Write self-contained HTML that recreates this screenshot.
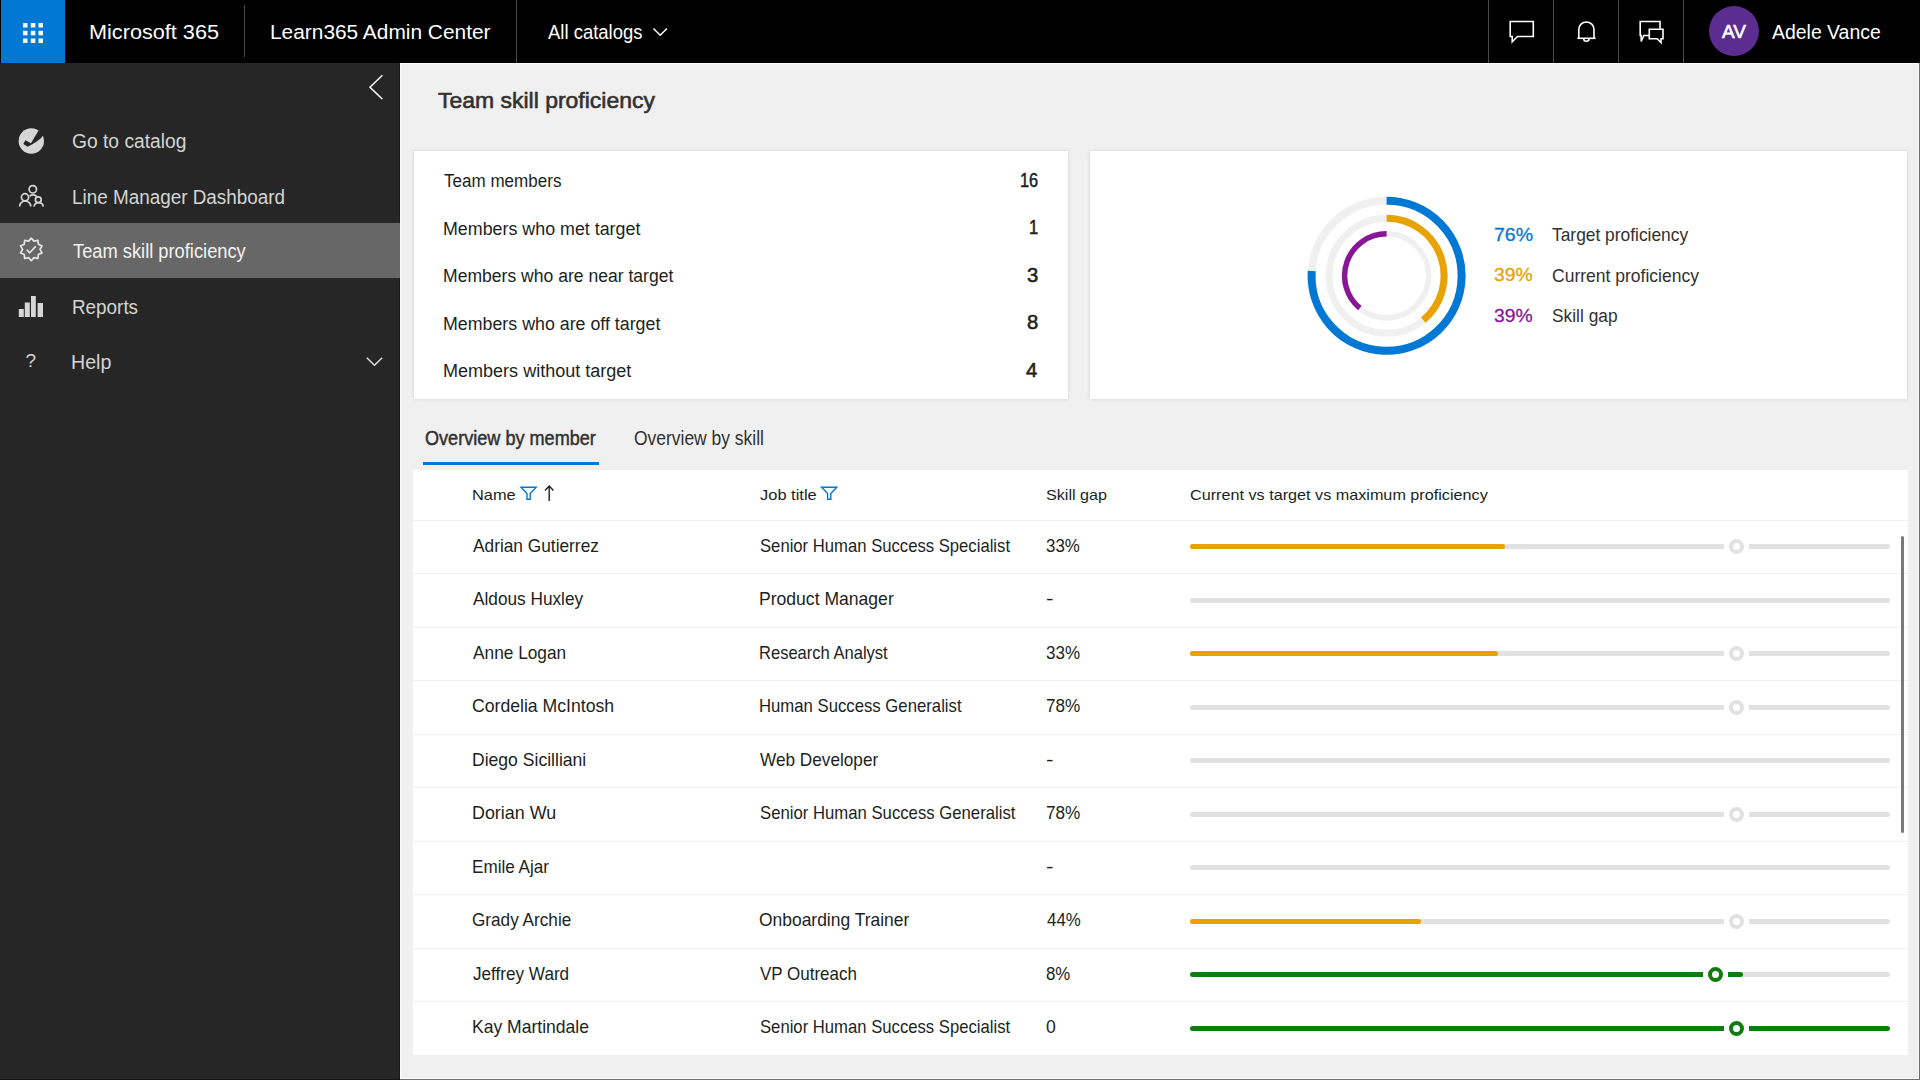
<!DOCTYPE html>
<html><head><meta charset="utf-8"><title>Team skill proficiency</title>
<style>
html,body{margin:0;padding:0;width:1920px;height:1080px;overflow:hidden;background:#f0f0f0;font-family:"Liberation Sans",sans-serif;}
.abs{position:absolute;}
.t{position:absolute;white-space:nowrap;display:inline-block;}
.b{position:absolute;height:5px;}
.ring{position:absolute;width:7px;height:7px;border:4px solid #e1e1e1;border-radius:50%;background:#fff;}
.vd{position:absolute;width:1px;background:#4a4a4a;}
.sep{position:absolute;left:413px;width:1495px;height:1px;background:#f0f0f0;}
</style></head>
<body>
<!-- header -->
<div class="abs" style="left:0;top:0;width:1920px;height:63px;background:#000"></div>
<div class="abs" style="left:1px;top:0;width:64px;height:63px;background:#0078d4"></div>
<svg class="abs" style="left:0;top:0" width="70" height="63">
  <g fill="#fff">
    <rect x="23" y="23" width="4.5" height="4.5"/><rect x="30.8" y="23" width="4.5" height="4.5"/><rect x="38.5" y="23" width="4.5" height="4.5"/>
    <rect x="23" y="30.8" width="4.5" height="4.5"/><rect x="30.8" y="30.8" width="4.5" height="4.5"/><rect x="38.5" y="30.8" width="4.5" height="4.5"/>
    <rect x="23" y="38.5" width="4.5" height="4.5"/><rect x="30.8" y="38.5" width="4.5" height="4.5"/><rect x="38.5" y="38.5" width="4.5" height="4.5"/>
  </g>
</svg>
<div class="vd" style="left:244px;top:5px;height:52px"></div>
<div class="vd" style="left:516px;top:0px;height:63px"></div>
<div class="vd" style="left:1488px;top:0px;height:63px"></div>
<div class="vd" style="left:1553px;top:0px;height:63px"></div>
<div class="vd" style="left:1618px;top:0px;height:63px"></div>
<div class="vd" style="left:1683px;top:0px;height:63px"></div>
<svg class="abs" style="left:0;top:0" width="1920" height="63">
  <!-- all catalogs chevron -->
  <path d="M653.5 28.5 L660.2 35.2 L667 28.5" fill="none" stroke="#fff" stroke-width="1.5"/>
  <!-- chat -->
  <path d="M1510.2 21.5 H1533.3 V36.5 H1517.5 L1512.2 41.8 V36.5 H1510.2 Z" fill="none" stroke="#fff" stroke-width="1.6"/>
  <!-- bell -->
  <path d="M1578.8 38 V29.5 A7.6 7.6 0 0 1 1594 29.5 V38" fill="none" stroke="#fff" stroke-width="1.6"/>
  <path d="M1577.3 38.3 H1595.6" fill="none" stroke="#fff" stroke-width="1.6"/>
  <path d="M1583.6 38.5 A2.8 2.8 0 0 0 1589.2 38.5" fill="none" stroke="#fff" stroke-width="1.5"/>
  <!-- chat 2 -->
  <path d="M1649 35.5 H1643.8 L1641.2 41.5 V35.5 H1640.2 V21.5 H1660 V28.8" fill="none" stroke="#fff" stroke-width="1.6"/>
  <path d="M1649.3 29.3 H1663 V38.8 H1661 V42.5 L1657.2 38.8 H1649.3 Z" fill="none" stroke="#fff" stroke-width="1.6"/>
</svg>
<div class="abs" style="left:1709px;top:5.5px;width:50px;height:50px;border-radius:50%;background:#5c2d91"></div>
<span class="t" style="left:1709px;top:20.5px;width:50px;text-align:center;font-size:19px;line-height:22px;font-weight:400;-webkit-text-stroke:0.6px #fff;color:#fff">AV</span>

<!-- sidebar -->
<div class="abs" style="left:0;top:63px;width:400px;height:1017px;background:#262626"></div>
<div class="abs" style="left:399px;top:63px;width:1px;height:1017px;background:#1c1c1c"></div>
<div class="abs" style="left:0;top:223px;width:400px;height:55px;background:#676767"></div>
<svg class="abs" style="left:0;top:63px" width="400" height="340">
  <g transform="translate(0,-63)">
  <!-- collapse chevron -->
  <path d="M382.4 75.3 L370 87.3 L382.4 99.1" fill="none" stroke="#f0f0f0" stroke-width="1.6"/>
  <!-- go to catalog: filled circle with check -->
  <circle cx="31.3" cy="141" r="12.7" fill="#d6d6d6"/>
  <path d="M23.3 144 L25.4 140.2 L31 143.3 L38.8 130 L44 134.5 Q40 140.5 27.7 146.8 Z" fill="#262626"/>
  <!-- people icon -->
  <g fill="none" stroke="#d6d6d6" stroke-width="1.7">
    <circle cx="32.8" cy="189.3" r="3.7"/>
    <path d="M29.6 196.2 A6 6 0 0 1 37.2 196.8"/>
    <circle cx="25" cy="197.3" r="3.6"/>
    <path d="M19.6 206.6 A5.6 5.6 0 0 1 30.8 206.6"/>
    <circle cx="38.3" cy="199.8" r="2.9"/>
    <path d="M34 206.6 A4.7 4.7 0 0 1 43.3 206.6"/>
  </g>
  <!-- badge icon -->
  <path fill="none" stroke="#e6e6e6" stroke-width="1.7" stroke-linejoin="round" d="M31.30 238.10 L33.99 241.13 L37.94 240.26 L38.34 244.29 L42.05 245.91 L40.00 249.40 L42.05 252.89 L38.34 254.51 L37.94 258.54 L33.99 257.67 L31.30 260.70 L28.61 257.67 L24.66 258.54 L24.26 254.51 L20.55 252.89 L22.60 249.40 L20.55 245.91 L24.26 244.29 L24.66 240.26 L28.61 241.13 Z"/>
  <path d="M26.7 249.6 L29.6 252.8 L35.8 246.4" fill="none" stroke="#e6e6e6" stroke-width="1.6"/>
  <!-- reports bars -->
  <g fill="#d6d6d6">
    <rect x="18.8" y="309" width="5" height="8"/>
    <rect x="24.8" y="302.5" width="5" height="14.5"/>
    <rect x="31" y="296" width="4.8" height="21"/>
    <rect x="37.6" y="303" width="5.4" height="14"/>
  </g>
  <!-- help chevron -->
  <path d="M366.8 357.8 L374.5 365.3 L382.2 357.8" fill="none" stroke="#e0e0e0" stroke-width="1.5"/>
  </g>
</svg>
<span class="t" style="left:25.5px;top:351px;font-size:19px;line-height:19px;color:#d6d6d6">?</span>

<!-- cards -->
<div class="abs" style="left:414px;top:151px;width:654px;height:248px;background:#fff;box-shadow:0 0 1px rgba(0,0,0,0.10),0 0 4px rgba(0,0,0,0.10)"></div>
<div class="abs" style="left:1090px;top:151px;width:817px;height:248px;background:#fff;box-shadow:0 0 1px rgba(0,0,0,0.10),0 0 4px rgba(0,0,0,0.10)"></div>
<svg class="abs" width="1920" height="1080" style="left:0;top:0"><circle cx="1386.6" cy="275.8" r="75" fill="none" stroke="#f0f0f0" stroke-width="8"/><circle cx="1386.6" cy="275.8" r="57.5" fill="none" stroke="#f0f0f0" stroke-width="7"/><circle cx="1386.6" cy="275.8" r="42" fill="none" stroke="#f0f0f0" stroke-width="5.5"/><path d="M1386.60 200.80 A75 75 0 1 1 1311.75 271.09" fill="none" stroke="#0078d4" stroke-width="8"/><path d="M1386.60 218.30 A57.5 57.5 0 0 1 1423.25 320.10" fill="none" stroke="#e8a202" stroke-width="7"/><path d="M1386.60 233.80 A42 42 0 0 0 1359.83 308.16" fill="none" stroke="#881798" stroke-width="5.5"/></svg>

<!-- tabs underline -->
<div class="abs" style="left:423px;top:462px;width:176px;height:3px;background:#0078d4"></div>

<!-- table -->
<div class="abs" style="left:413px;top:470px;width:1495px;height:585px;background:#fff"></div>
<div class="sep" style="top:520px"></div>
<div class="sep" style="top:573px"></div>
<div class="sep" style="top:627px"></div>
<div class="sep" style="top:680px"></div>
<div class="sep" style="top:734px"></div>
<div class="sep" style="top:787px"></div>
<div class="sep" style="top:841px"></div>
<div class="sep" style="top:894px"></div>
<div class="sep" style="top:948px"></div>
<div class="sep" style="top:1001px"></div>
<svg class="abs" style="left:0;top:470px" width="1920" height="50">
  <g transform="translate(0,-470)" fill="none">
    <path d="M521 487.2 H536.2 L530.2 493.6 V499.2 H527 V493.6 Z" stroke="#0078d4" stroke-width="1.4" stroke-linejoin="miter"/>
    <path d="M821.6 487.2 H836.8 L830.8 493.6 V499.2 H827.6 V493.6 Z" stroke="#0078d4" stroke-width="1.4"/>
    <path d="M549.2 501 V486.5 M545 490.5 L549.2 486 L553.4 490.5" stroke="#201f1e" stroke-width="1.4"/>
  </g>
</svg>
<div class="b" style="left:1190.00px;top:544.10px;width:533.50px;background:#e1e1e1;border-radius:2.5px 0 0 2.5px;"></div>
<div class="b" style="left:1749.00px;top:544.10px;width:141.00px;background:#e1e1e1;border-radius:0 2.5px 2.5px 0;"></div>
<div class="b" style="left:1190.00px;top:544.10px;width:315.00px;background:#e8a202;border-radius:2.5px 2.5px 2.5px 2.5px;"></div>
<div class="ring" style="left:1728.70px;top:539.10px;border-color:#e1e1e1"></div>
<div class="b" style="left:1190.00px;top:597.60px;width:700.00px;background:#e1e1e1;border-radius:2.5px 2.5px 2.5px 2.5px;"></div>
<div class="b" style="left:1190.00px;top:651.10px;width:533.50px;background:#e1e1e1;border-radius:2.5px 0 0 2.5px;"></div>
<div class="b" style="left:1749.00px;top:651.10px;width:141.00px;background:#e1e1e1;border-radius:0 2.5px 2.5px 0;"></div>
<div class="b" style="left:1190.00px;top:651.10px;width:307.50px;background:#e8a202;border-radius:2.5px 2.5px 2.5px 2.5px;"></div>
<div class="ring" style="left:1728.70px;top:646.10px;border-color:#e1e1e1"></div>
<div class="b" style="left:1190.00px;top:704.60px;width:533.50px;background:#e1e1e1;border-radius:2.5px 0 0 2.5px;"></div>
<div class="b" style="left:1749.00px;top:704.60px;width:141.00px;background:#e1e1e1;border-radius:0 2.5px 2.5px 0;"></div>
<div class="ring" style="left:1728.70px;top:699.60px;border-color:#e1e1e1"></div>
<div class="b" style="left:1190.00px;top:758.10px;width:700.00px;background:#e1e1e1;border-radius:2.5px 2.5px 2.5px 2.5px;"></div>
<div class="b" style="left:1190.00px;top:811.60px;width:533.50px;background:#e1e1e1;border-radius:2.5px 0 0 2.5px;"></div>
<div class="b" style="left:1749.00px;top:811.60px;width:141.00px;background:#e1e1e1;border-radius:0 2.5px 2.5px 0;"></div>
<div class="ring" style="left:1728.70px;top:806.60px;border-color:#e1e1e1"></div>
<div class="b" style="left:1190.00px;top:865.10px;width:700.00px;background:#e1e1e1;border-radius:2.5px 2.5px 2.5px 2.5px;"></div>
<div class="b" style="left:1190.00px;top:918.60px;width:533.50px;background:#e1e1e1;border-radius:2.5px 0 0 2.5px;"></div>
<div class="b" style="left:1749.00px;top:918.60px;width:141.00px;background:#e1e1e1;border-radius:0 2.5px 2.5px 0;"></div>
<div class="b" style="left:1190.00px;top:918.60px;width:231.00px;background:#e8a202;border-radius:2.5px 2.5px 2.5px 2.5px;"></div>
<div class="ring" style="left:1728.70px;top:913.60px;border-color:#e1e1e1"></div>
<div class="b" style="left:1190.00px;top:972.10px;width:512.50px;background:#107c10;border-radius:2.5px 0 0 2.5px;"></div>
<div class="b" style="left:1728.00px;top:972.10px;width:162.00px;background:#e1e1e1;border-radius:0 2.5px 2.5px 0;"></div>
<div class="b" style="left:1728.00px;top:972.10px;width:15.00px;background:#107c10;border-radius:0 2.5px 2.5px 0;"></div>
<div class="ring" style="left:1707.50px;top:967.10px;border-color:#107c10"></div>
<div class="b" style="left:1190.00px;top:1025.60px;width:533.50px;background:#107c10;border-radius:2.5px 0 0 2.5px;"></div>
<div class="b" style="left:1749.00px;top:1025.60px;width:141.00px;background:#107c10;border-radius:0 2.5px 2.5px 0;"></div>
<div class="ring" style="left:1728.70px;top:1020.60px;border-color:#107c10"></div>
<!-- scrollbar -->
<div class="abs" style="left:1901px;top:536px;width:3px;height:297px;background:#7a7a7a;border-radius:1.5px"></div>
<!-- window border -->
<div class="abs" style="left:400px;top:63px;width:1px;height:1016px;background:#fcfcfc"></div>
<div class="abs" style="left:400px;top:63px;width:1519px;height:1px;background:#fcfcfc"></div>
<div class="abs" style="left:400px;top:1078px;width:1519px;height:1px;background:#fafafa"></div>
<div class="abs" style="left:1918px;top:63px;width:1px;height:1016px;background:#fafafa"></div>
<div class="abs" style="left:1919px;top:63px;width:1px;height:1017px;background:#6e6e6e"></div>
<div class="abs" style="left:400px;top:1079px;width:1520px;height:1px;background:#6e6e6e"></div>
<div class="abs" style="left:0;top:1079px;width:400px;height:1px;background:#141414"></div>


<span class="t" style="left:89.31px;transform-origin:0 0;top:22.47px;font-size:20.71px;line-height:20.71px;font-weight:400;color:#ffffff;transform:scaleX(1.0462);">Microsoft 365</span>
<span class="t" style="left:269.57px;transform-origin:0 0;top:22.47px;font-size:20.71px;line-height:20.71px;font-weight:400;color:#ffffff;transform:scaleX(1.0083);">Learn365 Admin Center</span>
<span class="t" style="left:548.00px;transform-origin:0 0;top:22.47px;font-size:20.71px;line-height:20.71px;font-weight:400;color:#ffffff;transform:scaleX(0.8929);">All catalogs</span>
<span class="t" style="left:1772.00px;transform-origin:0 0;top:22.47px;font-size:20.71px;line-height:20.71px;font-weight:400;color:#ffffff;transform:scaleX(0.9385);">Adele Vance</span>
<span class="t" style="left:72.10px;transform-origin:0 0;top:132.44px;font-size:19.33px;line-height:19.33px;font-weight:400;color:#d4d4d4;transform:scaleX(0.9956);">Go to catalog</span>
<span class="t" style="left:71.53px;transform-origin:0 0;top:187.74px;font-size:19.33px;line-height:19.33px;font-weight:400;color:#d4d4d4;transform:scaleX(0.9765);">Line Manager Dashboard</span>
<span class="t" style="left:72.71px;transform-origin:0 0;top:242.44px;font-size:19.33px;line-height:19.33px;font-weight:400;color:#f4f4f4;transform:scaleX(0.9461);">Team skill proficiency</span>
<span class="t" style="left:71.53px;transform-origin:0 0;top:297.64px;font-size:19.33px;line-height:19.33px;font-weight:400;color:#d4d4d4;transform:scaleX(0.9760);">Reports</span>
<span class="t" style="left:71.47px;transform-origin:0 0;top:352.64px;font-size:19.33px;line-height:19.33px;font-weight:400;color:#d4d4d4;transform:scaleX(1.0143);">Help</span>
<span class="t" style="left:437.64px;transform-origin:0 0;top:89.01px;font-size:22.67px;line-height:22.67px;font-weight:400;color:#323130;transform:scaleX(1.0133);-webkit-text-stroke:0.6px #323130;">Team skill proficiency</span>
<span class="t" style="left:444.13px;transform-origin:0 0;top:171.26px;font-size:19.19px;line-height:19.19px;font-weight:400;color:#201f1e;transform:scaleX(0.8880);">Team members</span>
<span class="t" style="left:1019.68px;transform-origin:0 0;top:170.89px;font-size:19.62px;line-height:19.62px;font-weight:400;color:#201f1e;transform:scaleX(0.8332);-webkit-text-stroke:0.55px #201f1e;">16</span>
<span class="t" style="left:443.01px;transform-origin:0 0;top:218.86px;font-size:19.19px;line-height:19.19px;font-weight:400;color:#201f1e;transform:scaleX(0.9300);">Members who met target</span>
<span class="t" style="left:1028.67px;transform-origin:0 0;top:218.49px;font-size:19.62px;line-height:19.62px;font-weight:400;color:#201f1e;transform:scaleX(0.8435);-webkit-text-stroke:0.55px #201f1e;">1</span>
<span class="t" style="left:443.03px;transform-origin:0 0;top:266.06px;font-size:19.19px;line-height:19.19px;font-weight:400;color:#201f1e;transform:scaleX(0.9151);">Members who are near target</span>
<span class="t" style="left:1026.77px;transform-origin:0 0;top:265.69px;font-size:19.62px;line-height:19.62px;font-weight:400;color:#201f1e;transform:scaleX(1.0311);-webkit-text-stroke:0.55px #201f1e;">3</span>
<span class="t" style="left:443.01px;transform-origin:0 0;top:313.76px;font-size:19.19px;line-height:19.19px;font-weight:400;color:#201f1e;transform:scaleX(0.9278);">Members who are off target</span>
<span class="t" style="left:1026.77px;transform-origin:0 0;top:313.39px;font-size:19.62px;line-height:19.62px;font-weight:400;color:#201f1e;transform:scaleX(1.0311);-webkit-text-stroke:0.55px #201f1e;">8</span>
<span class="t" style="left:442.99px;transform-origin:0 0;top:360.96px;font-size:19.19px;line-height:19.19px;font-weight:400;color:#201f1e;transform:scaleX(0.9395);">Members without target</span>
<span class="t" style="left:1026.38px;transform-origin:0 0;top:360.59px;font-size:19.62px;line-height:19.62px;font-weight:400;color:#201f1e;transform:scaleX(1.0378);-webkit-text-stroke:0.55px #201f1e;">4</span>
<span class="t" style="left:1493.84px;transform-origin:0 0;top:225.63px;font-size:18.75px;line-height:18.75px;font-weight:400;color:#0078d4;transform:scaleX(1.0391);-webkit-text-stroke:0.3px #0078d4;">76%</span>
<span class="t" style="left:1552.23px;transform-origin:0 0;top:225.87px;font-size:18.46px;line-height:18.46px;font-weight:400;color:#323130;transform:scaleX(0.9420);">Target proficiency</span>
<span class="t" style="left:1494.15px;transform-origin:0 0;top:266.38px;font-size:18.75px;line-height:18.75px;font-weight:400;color:#e8a202;transform:scaleX(1.0307);-webkit-text-stroke:0.3px #e8a202;">39%</span>
<span class="t" style="left:1551.68px;transform-origin:0 0;top:266.62px;font-size:18.46px;line-height:18.46px;font-weight:400;color:#323130;transform:scaleX(0.9494);">Current proficiency</span>
<span class="t" style="left:1494.15px;transform-origin:0 0;top:307.23px;font-size:18.75px;line-height:18.75px;font-weight:400;color:#881798;transform:scaleX(1.0307);-webkit-text-stroke:0.3px #881798;">39%</span>
<span class="t" style="left:1551.96px;transform-origin:0 0;top:307.47px;font-size:18.46px;line-height:18.46px;font-weight:400;color:#323130;transform:scaleX(0.9409);">Skill gap</span>
<span class="t" style="left:424.95px;transform-origin:0 0;top:428.45px;font-size:20.49px;line-height:20.49px;font-weight:400;color:#323130;transform:scaleX(0.8829);-webkit-text-stroke:0.5px #323130;">Overview by member</span>
<span class="t" style="left:633.78px;transform-origin:0 0;top:428.45px;font-size:20.49px;line-height:20.49px;font-weight:400;color:#323130;transform:scaleX(0.8517);">Overview by skill</span>
<span class="t" style="left:472.22px;transform-origin:0 0;top:487.73px;font-size:14.97px;line-height:14.97px;font-weight:400;color:#201f1e;transform:scaleX(1.0928);">Name</span>
<span class="t" style="left:759.74px;transform-origin:0 0;top:487.73px;font-size:14.97px;line-height:14.97px;font-weight:400;color:#201f1e;transform:scaleX(1.0994);">Job title</span>
<span class="t" style="left:1046.10px;transform-origin:0 0;top:487.73px;font-size:14.97px;line-height:14.97px;font-weight:400;color:#201f1e;transform:scaleX(1.0772);">Skill gap</span>
<span class="t" style="left:1189.54px;transform-origin:0 0;top:487.73px;font-size:14.97px;line-height:14.97px;font-weight:400;color:#201f1e;transform:scaleX(1.0813);">Current vs target vs maximum proficiency</span>
<span class="t" style="left:472.90px;transform-origin:0 0;top:536.50px;font-size:18.31px;line-height:18.31px;font-weight:400;color:#201f1e;transform:scaleX(0.9450);">Adrian Gutierrez</span>
<span class="t" style="left:759.68px;transform-origin:0 0;top:536.50px;font-size:18.31px;line-height:18.31px;font-weight:400;color:#201f1e;transform:scaleX(0.9106);">Senior Human Success Specialist</span>
<span class="t" style="left:1046.37px;transform-origin:0 0;top:535.76px;font-size:19.19px;line-height:19.19px;font-weight:400;color:#201f1e;transform:scaleX(0.8810);">33%</span>
<span class="t" style="left:472.90px;transform-origin:0 0;top:590.00px;font-size:18.31px;line-height:18.31px;font-weight:400;color:#201f1e;transform:scaleX(0.9414);">Aldous Huxley</span>
<span class="t" style="left:758.83px;transform-origin:0 0;top:590.00px;font-size:18.31px;line-height:18.31px;font-weight:400;color:#201f1e;transform:scaleX(0.9600);">Product Manager</span>
<span class="t" style="left:1046.19px;transform-origin:0 0;top:589.26px;font-size:19.19px;line-height:19.19px;font-weight:400;color:#201f1e;transform:scaleX(1.1773);">-</span>
<span class="t" style="left:472.90px;transform-origin:0 0;top:643.50px;font-size:18.31px;line-height:18.31px;font-weight:400;color:#201f1e;transform:scaleX(0.9442);">Anne Logan</span>
<span class="t" style="left:758.91px;transform-origin:0 0;top:643.50px;font-size:18.31px;line-height:18.31px;font-weight:400;color:#201f1e;transform:scaleX(0.9039);">Research Analyst</span>
<span class="t" style="left:1046.37px;transform-origin:0 0;top:642.76px;font-size:19.19px;line-height:19.19px;font-weight:400;color:#201f1e;transform:scaleX(0.8864);">33%</span>
<span class="t" style="left:472.07px;transform-origin:0 0;top:697.00px;font-size:18.31px;line-height:18.31px;font-weight:400;color:#201f1e;transform:scaleX(0.9636);">Cordelia McIntosh</span>
<span class="t" style="left:758.89px;transform-origin:0 0;top:697.00px;font-size:18.31px;line-height:18.31px;font-weight:400;color:#201f1e;transform:scaleX(0.9137);">Human Success Generalist</span>
<span class="t" style="left:1046.10px;transform-origin:0 0;top:696.26px;font-size:19.19px;line-height:19.19px;font-weight:400;color:#201f1e;transform:scaleX(0.8936);">78%</span>
<span class="t" style="left:471.53px;transform-origin:0 0;top:750.50px;font-size:18.31px;line-height:18.31px;font-weight:400;color:#201f1e;transform:scaleX(0.9600);">Diego Sicilliani</span>
<span class="t" style="left:760.20px;transform-origin:0 0;top:750.50px;font-size:18.31px;line-height:18.31px;font-weight:400;color:#201f1e;transform:scaleX(0.9396);">Web Developer</span>
<span class="t" style="left:1046.19px;transform-origin:0 0;top:749.76px;font-size:19.19px;line-height:19.19px;font-weight:400;color:#201f1e;transform:scaleX(1.1773);">-</span>
<span class="t" style="left:471.50px;transform-origin:0 0;top:804.00px;font-size:18.31px;line-height:18.31px;font-weight:400;color:#201f1e;transform:scaleX(0.9771);">Dorian Wu</span>
<span class="t" style="left:759.68px;transform-origin:0 0;top:804.00px;font-size:18.31px;line-height:18.31px;font-weight:400;color:#201f1e;transform:scaleX(0.9133);">Senior Human Success Generalist</span>
<span class="t" style="left:1046.10px;transform-origin:0 0;top:803.26px;font-size:19.19px;line-height:19.19px;font-weight:400;color:#201f1e;transform:scaleX(0.8936);">78%</span>
<span class="t" style="left:471.56px;transform-origin:0 0;top:857.50px;font-size:18.31px;line-height:18.31px;font-weight:400;color:#201f1e;transform:scaleX(0.9337);">Emile Ajar</span>
<span class="t" style="left:1046.19px;transform-origin:0 0;top:856.76px;font-size:19.19px;line-height:19.19px;font-weight:400;color:#201f1e;transform:scaleX(1.1773);">-</span>
<span class="t" style="left:472.09px;transform-origin:0 0;top:911.00px;font-size:18.31px;line-height:18.31px;font-weight:400;color:#201f1e;transform:scaleX(0.9385);">Grady Archie</span>
<span class="t" style="left:759.38px;transform-origin:0 0;top:911.00px;font-size:18.31px;line-height:18.31px;font-weight:400;color:#201f1e;transform:scaleX(0.9530);">Onboarding Trainer</span>
<span class="t" style="left:1046.64px;transform-origin:0 0;top:910.26px;font-size:19.19px;line-height:19.19px;font-weight:400;color:#201f1e;transform:scaleX(0.8793);">44%</span>
<span class="t" style="left:472.63px;transform-origin:0 0;top:964.50px;font-size:18.31px;line-height:18.31px;font-weight:400;color:#201f1e;transform:scaleX(0.9362);">Jeffrey Ward</span>
<span class="t" style="left:760.20px;transform-origin:0 0;top:964.50px;font-size:18.31px;line-height:18.31px;font-weight:400;color:#201f1e;transform:scaleX(0.9276);">VP Outreach</span>
<span class="t" style="left:1046.37px;transform-origin:0 0;top:963.76px;font-size:19.19px;line-height:19.19px;font-weight:400;color:#201f1e;transform:scaleX(0.8773);">8%</span>
<span class="t" style="left:471.53px;transform-origin:0 0;top:1018.00px;font-size:18.31px;line-height:18.31px;font-weight:400;color:#201f1e;transform:scaleX(0.9585);">Kay Martindale</span>
<span class="t" style="left:759.68px;transform-origin:0 0;top:1018.00px;font-size:18.31px;line-height:18.31px;font-weight:400;color:#201f1e;transform:scaleX(0.9110);">Senior Human Success Specialist</span>
<span class="t" style="left:1046.35px;transform-origin:0 0;top:1017.26px;font-size:19.19px;line-height:19.19px;font-weight:400;color:#201f1e;transform:scaleX(0.9173);">0</span>
</body></html>
